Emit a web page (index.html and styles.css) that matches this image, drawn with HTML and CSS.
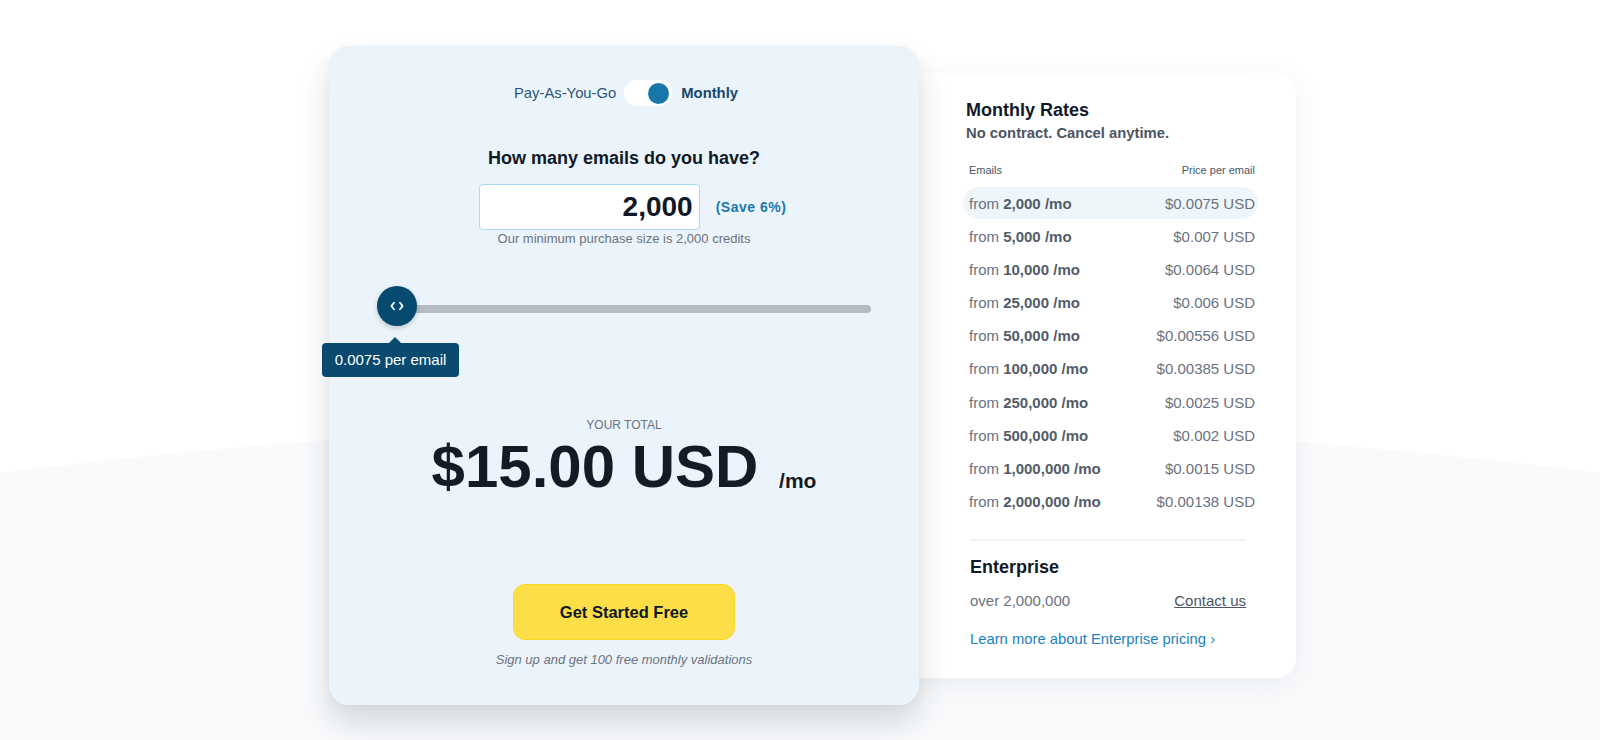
FILE: index.html
```html
<!DOCTYPE html>
<html lang="en">
<head>
<meta charset="utf-8">
<title>Pricing</title>
<link rel="stylesheet" href="styles.css">
</head>
<body>
<main class="pricing">
  <section class="calc-card">
    <div class="plan-toggle">
      <span class="plan-label">Pay-As-You-Go</span>
      <span class="switch"><span class="knob"></span></span>
      <span class="plan-label active">Monthly</span>
    </div>

    <h2 class="question">How many emails do you have?</h2>
    <div class="amount-row">
      <div class="amount-input">2,000</div>
      <span class="save">(Save 6%)</span>
    </div>
    <p class="min-note">Our minimum purchase size is 2,000 credits</p>

    <div class="slider">
      <span class="thumb">
        <svg width="14" height="10" viewBox="0 0 14 10" fill="none" stroke="#fff" stroke-width="1.8" stroke-linecap="round" stroke-linejoin="round">
          <path d="M4 1.8 L1.4 5 L4 8.2"/>
          <path d="M10 1.8 L12.6 5 L10 8.2"/>
        </svg>
      </span>
      <span class="track"></span>
      <div class="tooltip">0.0075 per email</div>
    </div>

    <p class="total-label">YOUR TOTAL</p>
    <div class="total">$15.00 USD <span class="per">/mo</span></div>

    <button class="cta">Get Started Free</button>
    <p class="cta-note">Sign up and get 100 free monthly validations</p>
  </section>

  <aside class="rates-card">
    <h3 class="rates-title">Monthly Rates</h3>
    <p class="rates-sub">No contract. Cancel anytime.</p>

    <div class="rates-head">
      <span>Emails</span>
      <span>Price per email</span>
    </div>
    <ul class="rates">
      <li class="rate current"><span>from <b>2,000 /mo</b></span><span>$0.0075 USD</span></li>
      <li class="rate"><span>from <b>5,000 /mo</b></span><span>$0.007 USD</span></li>
      <li class="rate"><span>from <b>10,000 /mo</b></span><span>$0.0064 USD</span></li>
      <li class="rate"><span>from <b>25,000 /mo</b></span><span>$0.006 USD</span></li>
      <li class="rate"><span>from <b>50,000 /mo</b></span><span>$0.00556 USD</span></li>
      <li class="rate"><span>from <b>100,000 /mo</b></span><span>$0.00385 USD</span></li>
      <li class="rate"><span>from <b>250,000 /mo</b></span><span>$0.0025 USD</span></li>
      <li class="rate"><span>from <b>500,000 /mo</b></span><span>$0.002 USD</span></li>
      <li class="rate"><span>from <b>1,000,000 /mo</b></span><span>$0.0015 USD</span></li>
      <li class="rate"><span>from <b>2,000,000 /mo</b></span><span>$0.00138 USD</span></li>
    </ul>

    <div class="enterprise">
      <h3 class="ent-title">Enterprise</h3>
      <div class="ent-row">
        <span>over 2,000,000</span>
        <a class="contact" href="#">Contact us</a>
      </div>
      <a class="learn" href="#">Learn more about Enterprise pricing ›</a>
    </div>
  </aside>
</main>
</body>
</html>
```

FILE: styles.css
```css
* { box-sizing: border-box; }

html, body {
  margin: 0;
  padding: 0;
  min-height: 100vh;
}

body {
  font-family: "Liberation Sans", Arial, sans-serif;
  color: #111827;
  background: radial-gradient(circle 6349px at 800px 6771px, #f8fafc 6348px, #ffffff 6349px);
  overflow: hidden;
}

.pricing {
  display: flex;
  align-items: flex-start;
  width: 967px;
  margin: 46px 0 0 329px;
}

/* ---------- left calculator card ---------- */
.calc-card {
  position: relative;
  z-index: 2;
  flex: 0 0 590px;
  height: 659px;
  padding: 34px 48px 0;
  background: #ebf4fb;
  border-radius: 20px;
  box-shadow: 0 18px 30px rgba(30, 35, 45, 0.15), 0 2px 10px rgba(30, 35, 45, 0.04);
  display: flex;
  flex-direction: column;
  align-items: center;
}

.plan-toggle {
  display: flex;
  align-items: center;
  height: 26px;
  padding-left: 4px;
  font-size: 14.8px;
  color: #2b5574;
}

.plan-label.active {
  font-weight: 700;
  color: #16476b;
}

.switch {
  display: flex;
  align-items: center;
  justify-content: flex-end;
  width: 48px;
  height: 26px;
  margin: 0 9px 0 8px;
  padding-right: 3px;
  background: #ffffff;
  border-radius: 13px;
}

.knob {
  width: 21px;
  height: 21px;
  border-radius: 50%;
  background: #1877a8;
}

.question {
  margin: 41px 0 0;
  font-size: 18px;
  line-height: 22px;
  font-weight: 700;
  color: #111827;
}

.amount-row {
  display: flex;
  align-items: center;
  gap: 16px;
  margin-top: 15px;
  padding-left: 17px;
}

.amount-input {
  width: 221px;
  height: 46px;
  padding-right: 6px;
  background: #ffffff;
  border: 1px solid #a9dcf2;
  border-radius: 4px;
  font-size: 28px;
  font-weight: 700;
  line-height: 44px;
  text-align: right;
  color: #111827;
}

.save {
  white-space: nowrap;
  font-size: 14px;
  font-weight: 700;
  letter-spacing: 0.5px;
  color: #1a78ab;
}

.min-note {
  margin: 1px 0 0;
  font-size: 13px;
  line-height: 16px;
  color: #6b7280;
}

.slider {
  position: relative;
  align-self: stretch;
  display: flex;
  align-items: center;
  height: 40px;
  margin-top: 39px;
}

.thumb {
  position: relative;
  z-index: 1;
  flex: 0 0 40px;
  height: 40px;
  border-radius: 50%;
  background: #064a70;
  box-shadow: 0 2px 5px rgba(0, 0, 0, 0.2);
  display: flex;
  align-items: center;
  justify-content: center;
}

.track {
  flex: 1;
  height: 8px;
  margin: 6px 0 0 -20px;
  border-radius: 4px;
  background: #b4bbc3;
}

.tooltip {
  position: absolute;
  left: -55px;
  top: 57px;
  width: 137px;
  height: 34px;
  border-radius: 4px;
  background: #0b4a6f;
  color: #ffffff;
  font-size: 15px;
  line-height: 34px;
  text-align: center;
}

.tooltip::before {
  content: "";
  position: absolute;
  left: 67px;
  top: -6px;
  border-left: 6px solid transparent;
  border-right: 6px solid transparent;
  border-bottom: 6px solid #0b4a6f;
}

.total-label {
  margin: 92px 0 0;
  font-size: 12px;
  line-height: 15px;
  color: #6b7280;
}

.total {
  margin-top: 4px;
  font-size: 60px;
  line-height: 60px;
  font-weight: 700;
  color: #151b26;
  white-space: nowrap;
}

.per {
  display: inline-block;
  margin-left: 4px;
  font-size: 21px;
  line-height: 1;
  vertical-align: -1px;
}

.cta {
  width: 222px;
  height: 56px;
  margin-top: 87px;
  border: 1px solid #f9d923;
  border-radius: 12px;
  background: #fcdf46;
  font-family: inherit;
  font-size: 16.5px;
  font-weight: 700;
  color: #111827;
  cursor: pointer;
}

.cta-note {
  margin: 12px 0 0;
  font-size: 13px;
  line-height: 16px;
  font-style: italic;
  color: #6b7280;
}

/* ---------- right rates card ---------- */
.rates-card {
  flex: 0 0 397px;
  height: 605px;
  margin: 27px 0 0 -20px;
  padding: 26px 38px 0 64px;
  background: #ffffff;
  border-radius: 20px;
  box-shadow: 0 6px 30px rgba(20, 30, 45, 0.06);
}

.rates-title {
  margin: 0 0 0 3px;
  font-size: 18px;
  line-height: 22px;
  font-weight: 700;
  color: #111827;
}

.rates-sub {
  margin: 2px 0 0 3px;
  font-size: 14.8px;
  line-height: 20px;
  font-weight: 700;
  color: #4b5563;
}

.rates-head {
  display: flex;
  justify-content: space-between;
  margin-top: 20px;
  padding: 0 3px 0 6px;
  font-size: 11px;
  line-height: 14px;
  color: #4b5563;
}

.rates {
  list-style: none;
  margin: 10px 0 0;
  padding: 0;
  display: flex;
  flex-direction: column;
  gap: 1.2px;
}

.rate {
  display: flex;
  justify-content: space-between;
  align-items: center;
  height: 32px;
  padding: 0 3px 0 6px;
  border-radius: 16px;
  font-size: 15px;
  color: #6b7280;
}

.rate b {
  color: #525c69;
}

.rate.current {
  background: #eef6fa;
}

.enterprise {
  margin: 21px 12px 0 7px;
  padding-top: 15px;
  border-top: 2px solid #f0f4f8;
}

.ent-title {
  margin: 0;
  font-size: 18px;
  line-height: 22px;
  font-weight: 700;
  color: #111827;
}

.ent-row {
  display: flex;
  justify-content: space-between;
  margin-top: 14px;
  font-size: 15px;
  line-height: 18px;
  color: #6b7280;
}

.contact {
  color: #4b5563;
  text-decoration: underline;
}

.learn {
  display: block;
  margin-top: 20px;
  font-size: 14.8px;
  line-height: 18px;
  color: #1b82c0;
  text-decoration: none;
}
```
